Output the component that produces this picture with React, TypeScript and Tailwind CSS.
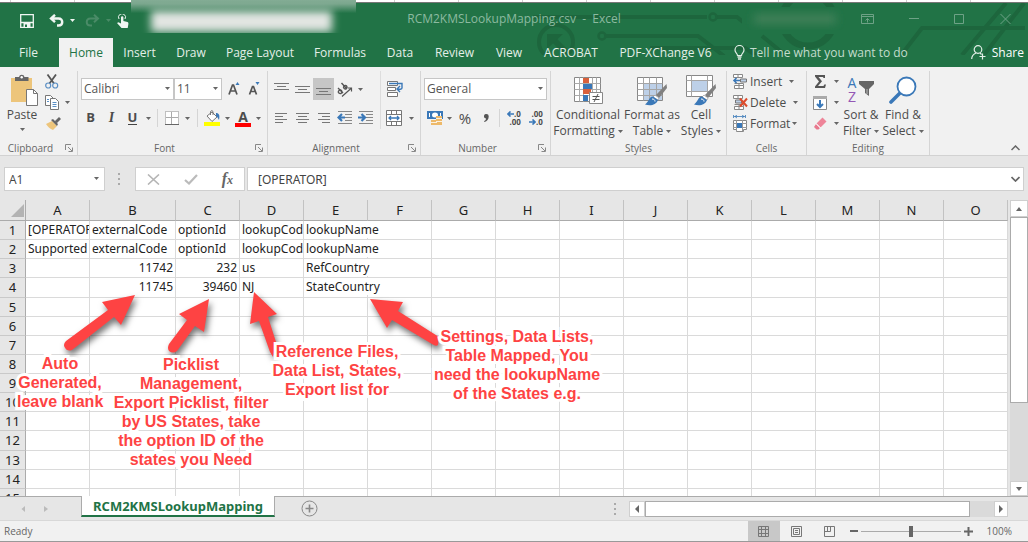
import React from "react";

type Kids = { children?: React.ReactNode };

function Caret() {
  return (
    <svg width="5" height="3" viewBox="0 0 5 3" aria-hidden="true" className="shrink-0">
      <path d="M0 0h5L2.5 3z" fill="#666" />
    </svg>
  );
}

function CaretButton({ label, className }: { label: string; className: string }) {
  return (
    <button type="button" aria-label={label} className={`flex h-full items-center justify-center ${className}`}>
      <Caret />
    </button>
  );
}

function Tool({ label, className = "w-[21px]", children }: Kids & { label: string; className?: string }) {
  return (
    <button type="button" aria-label={label} className={`flex h-full shrink-0 items-center justify-center ${className}`}>
      {children}
    </button>
  );
}

function Divider({ className }: { className: string }) {
  return (
    <span className={`flex h-[18px] justify-center ${className}`}>
      <span className="w-px bg-[#d5d5d5]" />
    </span>
  );
}

function Group({ label, launcher, className, children }: Kids & { label: string; launcher?: boolean; className: string }) {
  return (
    <section aria-label={label} className={`flex shrink-0 flex-col border-r border-[#d5d5d5] ${className}`}>
      <div className="h-[70px]">{children}</div>
      <div className="flex h-[14px] items-center text-[10px] leading-[14px] text-[#666]">
        <span className="flex-1 text-center">{label}</span>
        {launcher && (
          <button type="button" aria-label={`${label} options`} className="flex w-4 justify-center">
            <svg width="8" height="8" viewBox="0 0 8 8" fill="none" stroke="#888">
              <path d="M.5 6V.5H6M3 3l4 4M7.5 3.5v4h-4" />
            </svg>
          </button>
        )}
      </div>
    </section>
  );
}

function Picker({ label, value, className }: { label: string; value: string; className: string }) {
  return (
    <span className={`relative flex h-[22px] ${className}`}>
      <select
        aria-label={label}
        defaultValue={value}
        className="w-full appearance-none border border-[#c6c6c6] bg-white pl-[2px] text-xs leading-5 text-[#555] outline-none"
      >
        <option>{value}</option>
      </select>
      <span className="pointer-events-none absolute top-[9px] right-1">
        <Caret />
      </span>
    </span>
  );
}

function Lines({ rows }: { rows: [number, number, number][] }) {
  return (
    <svg width="15" height="14" viewBox="0 0 15 14" stroke="#777">
      {rows.map(([x1, x2, y]) => (
        <path key={y} d={`M${x1} ${y + 0.5}H${x2}`} />
      ))}
    </svg>
  );
}

function Indent({ out }: { out?: boolean }) {
  return (
    <svg width="16" height="14" viewBox="0 0 16 14" fill="none">
      <path d="M1 .5h14M8 3.5h7M8 6.5h7M8 9.5h7M1 12.5h14" stroke="#888" />
      <path d={out ? "M8 6.5H2M5 3L1.5 6.5 5 10" : "M0 6.5h6M3.500 3L7 6.500 3.500 10"} stroke="#3a78b8" strokeWidth="2.200" />
    </svg>
  );
}

function PaintBrush() {
  return (
    <g>
      <path d="M30.500 9L20 20l3 3 8-10z" fill="#808080" />
      <path d="M19 20l4 3-1 2-5-3z" fill="#fff" stroke="#888" strokeWidth=".6" />
      <path d="M17 21.500c-4 0-4 5-8 8 5 1.500 11 1 13-4.500z" fill="#3a78b8" />
      <path d="M16 24c2 0 3 1 3 2.500" stroke="#fff" fill="none" />
    </g>
  );
}

function ConditionalIcon() {
  return (
    <svg width="31" height="29" viewBox="0 0 31 29">
      <path d="M1.500 1.500h26v24h-26z" fill="#fff" stroke="#888" />
      <path d="M1.500 7.500h26M1.500 13.500h26M1.500 19.500h26M6.500 1.500v24M10.500 1.500v24M19.500 1.500v24M23.500 1.500v24" stroke="#aaa" />
      <path d="M10 2h6v5h-6zM10 13h8v5h-8z" fill="#d9603b" />
      <path d="M10 8h9v5h-9zM10 19h5v6h-5z" fill="#3a78b8" />
      <path d="M16.500 16.500h13v11h-13z" fill="#fff" stroke="#888" />
      <path d="M19.500 20.500h7M19.500 23.500h7M25 18l-4 8" stroke="#555" />
    </svg>
  );
}

function TableIcon() {
  return (
    <svg width="32" height="31" viewBox="0 0 32 31">
      <path d="M1.500 2.500h25v23h-25z" fill="#fff" stroke="#888" />
      <path d="M8 8h18v17H8z" fill="#bdd0e8" />
      <path d="M1.500 8.500h25M1.500 14.500h25M1.500 20.500h25M7.500 2.500v23M13.500 2.500v23M20.500 2.500v23" stroke="#a5a5a5" />
      <PaintBrush />
    </svg>
  );
}

function CellStylesIcon() {
  return (
    <svg width="32" height="31" viewBox="0 0 32 31">
      <path d="M1.500 .5h26v21h-26z" fill="#fff" stroke="#888" />
      <path d="M7 6h15v10H7z" fill="#bdd0e8" />
      <path d="M1.500 5.500h26M1.500 16.500h26M6.500 .5v21M22.500 .5v21" stroke="#a5a5a5" />
      <PaintBrush />
    </svg>
  );
}

function BigButton({ icon, first, second, className }: { icon: React.ReactNode; first: string; second: string; className: string }) {
  return (
    <button type="button" className={`flex flex-col items-center pt-[2px] text-xs leading-4 whitespace-nowrap ${className}`}>
      <span className="flex h-[34px] items-center">{icon}</span>
      <span>{first}</span>
      <span className="flex items-center gap-[3px]">
        {second}
        <Caret />
      </span>
    </button>
  );
}

function RowCells() {
  return <path d="M1.500 .5h9v3h-9zM6 .5v3M2.500 11.500h9v3h-9zM2.500 9.500h9v2M7 9.500v5" fill="#fff" stroke="#888" />;
}

function InsertIcon() {
  return (
    <svg width="16" height="15" viewBox="0 0 16 15">
      <RowCells />
      <path d="M8.500 5h6v3h-6z" fill="#bdd0e8" stroke="#777" />
      <path d="M8 6.500H2M4.500 4L2 6.500 4.500 9" fill="none" stroke="#3a78b8" strokeWidth="1.600" />
    </svg>
  );
}

function DeleteIcon() {
  return (
    <svg width="16" height="15" viewBox="0 0 16 15">
      <RowCells />
      <path d="M3.500 5h6v3h-6z" fill="#bdd0e8" stroke="#777" />
      <path d="M8 3.500l7 8M15 3.500l-7 8" stroke="#dd4b2c" strokeWidth="2" />
    </svg>
  );
}

function FormatIcon() {
  return (
    <svg width="16" height="17" viewBox="0 0 16 17">
      <path d="M2 1.500h11M1.500 0v3M13.500 0v3M5 0L3 1.500 5 3M10 0l2 1.500L10 3" fill="none" stroke="#3a78b8" strokeWidth=".8" />
      <path d="M1.500 5.500h13v9h-3v2h-7v-2h-3z" fill="#fff" stroke="#888" />
      <path d="M4.500 5v11M10.500 5v11M1 8.500h14M1 12.500h14" stroke="#999" />
      <path d="M5 8h5v5H5z" fill="#3a78b8" />
    </svg>
  );
}

function Ribbon() {
  return (
    <div className="flex h-[89px] shrink-0 border-b border-[#d2d2d2] bg-[#f1f1f1] pt-1 text-[#4c4c4c]">
      <Group label="Clipboard" launcher className="w-[78px]">
        <div className="flex">
          <button type="button" className="flex w-[44px] flex-col items-center pt-[2px] text-xs leading-4">
            <span className="flex h-[34px] items-center pl-1">
              <svg width="28" height="33" viewBox="0 0 28 33">
                <path d="M1 4h21v24H1z" fill="#edc57b" />
                <path d="M5 3h4a2.800 2.800 0 0 1 5.500 0h4v4H5z" fill="#666" />
                <circle cx="11.700" cy="3.300" r="1.200" fill="#fff" />
                <path d="M16.500 15.500h7l4 4v12h-11z" fill="#fff" stroke="#777" />
                <path d="M23.500 15.500v4h4" fill="none" stroke="#777" />
              </svg>
            </span>
            <span>Paste</span>
            <span className="flex h-3 items-center">
              <Caret />
            </span>
          </button>
          <div className="flex flex-col">
            <div className="h-[21px]">
              <Tool label="Cut" className="w-4">
                <svg width="14" height="15" viewBox="0 0 14 15" fill="none">
                  <path d="M2.500 .5L9 9.500M11 .5L4.500 9.500" stroke="#555" strokeWidth="1.800" />
                  <circle cx="3.200" cy="11.500" r="2.500" stroke="#5b8fc4" strokeWidth="1.200" />
                  <circle cx="10.200" cy="11.500" r="2.500" stroke="#5b8fc4" strokeWidth="1.200" />
                </svg>
              </Tool>
            </div>
            <div className="flex h-[21px]">
              <Tool label="Copy" className="w-4">
                <svg width="15" height="15" viewBox="0 0 15 15" fill="#fff" stroke="#777">
                  <path d="M.5 .5h5l3 3v7h-8z" />
                  <path d="M5.500 3.500h5l3 3v8h-8z" />
                  <path d="M2 4.500h2M2 6.500h2M7.500 7.500h4M7.500 9.500h4M7.500 11.500h4" stroke="#5b8fc4" />
                </svg>
              </Tool>
              <CaretButton label="Copy options" className="w-[15px]" />
            </div>
            <div className="h-[21px]">
              <Tool label="Format Painter" className="w-[18px]">
                <svg width="15" height="13" viewBox="0 0 15 13">
                  <path d="M0 7l6-3 5 5-4 4c-3-1-5-3-7-6z" fill="#edc57b" />
                  <path d="M5 3l2-1 5 5-1 2zM9 4l4-4 2 2-4 4z" fill="#666" />
                </svg>
              </Tool>
            </div>
          </div>
        </div>
      </Group>

      <Group label="Font" launcher className="w-[190px]">
        <div className="flex flex-col gap-[7px] pt-[7px]">
          <div className="flex h-[22px] pl-[3px]">
            <Picker label="Font" value="Calibri" className="w-[93px]" />
            <Picker label="Font size" value="11" className="mr-[2px] w-[48px]" />
            <Tool label="Increase font size" className="w-5">
              <svg width="13" height="15" viewBox="0 0 13 15" fill="none">
                <path d="M1 12.500L4.500 3h1L9 12.500M2.500 9h5" stroke="#555" strokeWidth="1.700" />
                <path d="M7.500 3l2-3 2 3z" fill="#3a78b8" />
              </svg>
            </Tool>
            <Tool label="Decrease font size" className="w-5">
              <svg width="13" height="15" viewBox="0 0 13 15" fill="none">
                <path d="M1.500 12.500l3-8h1l3 8M2.500 9.500h5" stroke="#555" strokeWidth="1.700" />
                <path d="M7.500 0l2 3 2-3z" fill="#3a78b8" />
              </svg>
            </Tool>
          </div>
          <div className="flex h-[22px] items-center pl-[2px] text-[13px] font-bold">
            <Tool label="Bold">B</Tool>
            <Tool label="Italic">
              <span className="font-['Liberation_Serif',serif] text-sm italic">I</span>
            </Tool>
            <Tool label="Underline">
              <span className="border-b border-[#444] leading-[13px]">U</span>
            </Tool>
            <CaretButton label="Underline options" className="w-[10px]" />
            <Divider className="w-[9px]" />
            <Tool label="Borders" className="w-5">
              <svg width="14" height="14" viewBox="0 0 14 14" fill="#fff" stroke="#888">
                <path d="M.5 .5h13v13H.5z" strokeDasharray="1 1" />
                <path d="M6.500 1v12M1 6.500h12" stroke="#aaa" />
                <path d="M0 13.500h14" stroke="#666" />
              </svg>
            </Tool>
            <CaretButton label="Border options" className="w-[11px]" />
            <Divider className="w-[9px]" />
            <Tool label="Fill colour" className="w-5">
              <svg width="17" height="16" viewBox="0 0 17 16">
                <path d="M3 6l5-4 5 5-5 4.500z" fill="#fff" stroke="#777" />
                <path d="M6.500 5V1.500Q8 -.5 9 1.500V5" fill="none" stroke="#777" />
                <path d="M12 3c3 0 4 2 3 7-1-1-1-3-3-4z" fill="#3a78b8" />
                <path d="M0 12h16v4H0z" fill="#ff0" />
              </svg>
            </Tool>
            <CaretButton label="Fill colour options" className="w-[10px]" />
            <Tool label="Font colour" className="w-[22px]">
              <span className="border-b-4 border-[#f00] px-[3px] text-sm leading-[13px]">A</span>
            </Tool>
            <CaretButton label="Font colour options" className="w-[9px]" />
          </div>
        </div>
      </Group>

      <Group label="Alignment" launcher className="w-[153px]">
        <div className="flex pl-[3px]">
          <div className="flex w-[110px] flex-col gap-[7px] border-r border-[#ddd] pt-[7px]">
            <div className="flex h-[22px]">
              <Tool label="Top align">
                <Lines rows={[[0, 15, 1], [3, 12, 4], [0, 15, 7]]} />
              </Tool>
              <Tool label="Middle align">
                <Lines rows={[[0, 15, 4], [3, 12, 7], [0, 15, 10]]} />
              </Tool>
              <Tool label="Bottom align" className="w-[21px] bg-[#c6c6c6]">
                <Lines rows={[[0, 15, 6], [3, 12, 9], [0, 15, 12]]} />
              </Tool>
              <Tool label="Orientation">
                <svg width="16" height="15" viewBox="0 0 16 15" fill="none" stroke="#555">
                  <path d="M1 6l5 5M2 8.500c-2 2 1 4 2.500 2.500S4 7 2 8.500M4.500 1l5.500 6M7 4c2-2 4 1 2.500 2.500S5.500 6 7 4" strokeWidth="1.400" />
                  <path d="M5 14.500L14.500 6M11 6h3.500v3.500" strokeWidth="1.200" />
                </svg>
              </Tool>
              <CaretButton label="Orientation options" className="w-[10px]" />
            </div>
            <div className="flex h-[22px]">
              <Tool label="Align left">
                <Lines rows={[[1, 13, 2], [1, 9, 5], [1, 13, 8], [1, 9, 11]]} />
              </Tool>
              <Tool label="Center">
                <Lines rows={[[1, 14, 2], [3, 12, 5], [1, 14, 8], [3, 12, 11]]} />
              </Tool>
              <Tool label="Align right">
                <Lines rows={[[2, 14, 2], [6, 14, 5], [2, 14, 8], [6, 14, 11]]} />
              </Tool>
              <Tool label="Decrease indent">
                <Indent out />
              </Tool>
              <Tool label="Increase indent">
                <Indent />
              </Tool>
            </div>
          </div>
          <div className="flex flex-col gap-[7px] pt-[7px]">
            <div className="flex h-[22px]">
              <Tool label="Wrap text" className="w-[28px]">
                <svg width="17" height="16" viewBox="0 0 17 16" fill="none" stroke="#777">
                  <path d="M.5 .5h10v4H.5zM.5 6.500h8v3h-8zM.5 11.500h10v4H.5z" fill="#fff" />
                  <path d="M2 2.500h13V7c0 1.500-3 1.500-4 1M13 5l-3 3 3 3" stroke="#3a78b8" strokeWidth="1.400" />
                </svg>
              </Tool>
            </div>
            <div className="flex h-[22px]">
              <Tool label="Merge and center" className="w-[26px]">
                <svg width="16" height="16" viewBox="0 0 16 16" fill="#fff" stroke="#777">
                  <path d="M.5 .5h15v15H.5zM.5 4.500h15M.5 11.500h15M5.500 .5v4M10.500 .5v4M5.500 11.500v4M10.500 11.500v4" />
                  <path d="M3 8h10M5 6L3 8l2 2M11 6l2 2-2 2" fill="none" stroke="#3a78b8" strokeWidth="1.300" />
                </svg>
              </Tool>
              <CaretButton label="Merge options" className="w-[8px]" />
            </div>
          </div>
        </div>
      </Group>

      <Group label="Number" launcher className="w-[130px]">
        <div className="flex flex-col gap-[7px] pt-[7px] pl-[3px]">
          <Picker label="Number format" value="General" className="w-[123px]" />
          <div className="flex h-[22px] items-center">
            <Tool label="Accounting format">
              <svg width="16" height="16" viewBox="0 0 16 16">
                <path d="M0 1h16v8H0z" fill="#3a78b8" />
                <ellipse cx="8" cy="5" rx="3" ry="2.500" fill="#fff" />
                <path d="M2 3h1v4H2zM13 3h1v4h-1z" fill="#fff" />
                <path d="M9 6h6v9H9zM4 10h6v5H4z" fill="#edb96a" />
                <path d="M9 8.500h6M9 11.500h6M4 12.500h6" stroke="#fff" strokeWidth=".8" />
              </svg>
            </Tool>
            <CaretButton label="Accounting options" className="w-[9px]" />
            <Tool label="Percent" className="w-[22px]">
              <span className="text-[15px]">%</span>
            </Tool>
            <Tool label="Comma" className="w-5">
              <svg width="5" height="8" viewBox="0 0 5 8">
                <path d="M2.300 0A2.200 2.200 0 0 0 2 4.400C2 6 1 6.500 0 7l.5 1C3 7.500 4.700 5.500 4.700 2.600A2.400 2.400 0 0 0 2.300 0z" fill="#555" />
              </svg>
            </Tool>
            <Divider className="w-[7px]" />
            <Tool label="Increase decimal" className="w-[22px]">
              <span className="flex flex-col items-end text-[8px] leading-[8px] font-bold">
                <span className="flex items-center">
                  <svg width="7" height="6" viewBox="0 0 7 6" fill="none" stroke="#3a78b8" strokeWidth="1.600">
                    <path d="M7 3H1M3.500 .5L1 3l2.500 2.500" />
                  </svg>
                  .0
                </span>
                <span>.00</span>
              </span>
            </Tool>
            <Tool label="Decrease decimal" className="w-[22px]">
              <span className="flex flex-col items-end text-[8px] leading-[8px] font-bold">
                <span>.00</span>
                <span className="flex items-center">
                  <svg width="7" height="6" viewBox="0 0 7 6" fill="none" stroke="#3a78b8" strokeWidth="1.600">
                    <path d="M0 3h6M3.500 .5L6 3 3.500 5.500" />
                  </svg>
                  .0
                </span>
              </span>
            </Tool>
          </div>
        </div>
      </Group>

      <Group label="Styles" className="w-[176px]">
        <div className="flex">
          <BigButton className="w-[74px]" first="Conditional" second="Formatting" icon={<ConditionalIcon />} />
          <BigButton className="w-[54px]" first="Format as" second="Table" icon={<TableIcon />} />
          <BigButton className="w-[44px]" first="Cell" second="Styles" icon={<CellStylesIcon />} />
        </div>
      </Group>

      <Group label="Cells" className="w-[80px]">
        <div className="flex flex-col pl-[5px] text-xs">
          <button type="button" className="flex h-[21px] items-center gap-[2px]">
            <InsertIcon />
            <span className="mr-[5px]">Insert</span>
            <Caret />
          </button>
          <button type="button" className="flex h-[21px] items-center gap-[2px]">
            <DeleteIcon />
            <span className="mr-[5px]">Delete</span>
            <Caret />
          </button>
          <button type="button" className="flex h-[21px] items-center gap-[2px]">
            <FormatIcon />
            <span>Format</span>
            <Caret />
          </button>
        </div>
      </Group>

      <Group label="Editing" className="w-[123px]">
        <div className="flex">
          <div className="flex w-[34px] flex-col pl-[2px]">
            <div className="flex h-[21px]">
              <Tool label="AutoSum" className="w-[22px]">
                <svg width="13" height="13" viewBox="0 0 13 13">
                  <path d="M1 0h10v3h-1.500l-.5-1H4.500L8 6.300 4 11h5.500l.8-1.500H12L11 13H1v-1.500L5 6.500 1 1.500z" fill="#555" />
                </svg>
              </Tool>
              <CaretButton label="AutoSum options" className="w-[10px]" />
            </div>
            <div className="flex h-[21px]">
              <Tool label="Fill" className="w-[22px]">
                <svg width="14" height="14" viewBox="0 0 14 14">
                  <path d="M.5 .5h13v13H.5z" fill="#fff" stroke="#888" />
                  <path d="M0 0h14v3H0z" fill="#aaa" />
                  <path d="M7 4v7M4 8l3 3 3-3" fill="none" stroke="#3a78b8" strokeWidth="2" />
                </svg>
              </Tool>
              <CaretButton label="Fill options" className="w-[10px]" />
            </div>
            <div className="flex h-[21px]">
              <Tool label="Clear" className="w-[22px]">
                <svg width="13" height="13" viewBox="0 0 13 13">
                  <path d="M8.500 .5l4 4-6 6-4-4z" fill="#ee8599" />
                  <path d="M2 7l4 4-1.500 1.500h-2L0 10z" fill="#e8798e" />
                  <path d="M2 6.500l4.500 4.500" stroke="#fff" />
                </svg>
              </Tool>
              <CaretButton label="Clear options" className="w-[10px]" />
            </div>
          </div>
          <BigButton
            className="w-[40px]"
            first="Sort &amp;"
            second="Filter"
            icon={
              <span className="flex items-center gap-[3px]">
                <span className="flex flex-col text-sm leading-[14px]">
                  <span className="text-[#3a78b8]">A</span>
                  <span className="text-[#9457b5]">Z</span>
                </span>
                <svg width="15" height="19" viewBox="0 0 15 19">
                  <path d="M0 0h15v3L10 8v7l-4-3V8L0 3z" fill="#666" />
                  <path d="M8 8v5" stroke="#bbb" />
                </svg>
              </span>
            }
          />
          <BigButton
            className="w-[44px]"
            first="Find &amp;"
            second="Select"
            icon={
              <svg width="28" height="28" viewBox="0 0 28 28">
                <path d="M11 17l-9 9" stroke="#3a78b8" strokeWidth="3.600" strokeLinecap="round" />
                <circle cx="17.500" cy="10.500" r="9" fill="#fff" stroke="#3a78b8" strokeWidth="1.800" />
              </svg>
            }
          />
        </div>
      </Group>

      <button type="button" aria-label="Collapse the ribbon" className="mt-auto mr-2 mb-1 ml-auto">
        <svg width="9" height="6" viewBox="0 0 9 6" fill="none" stroke="#666" strokeWidth="1.500">
          <path d="M.5 5l4-4 4 4" />
        </svg>
      </button>
    </div>
  );
}

const tabs = ["File", "Home", "Insert", "Draw", "Page Layout", "Formulas", "Data", "Review", "View", "ACROBAT", "PDF-XChange V6"];

function TitleBar() {
  return (
    <header className="relative flex h-[65px] shrink-0 flex-col overflow-hidden border-t border-[#777] bg-[#217346] text-xs text-[#e4efe8]">
      <svg
        aria-hidden="true"
        className="absolute top-0 right-0"
        width="498"
        height="52"
        viewBox="530 3 498 52"
        fill="none"
        stroke="#1d663d"
        strokeWidth="4"
      >
        <circle cx="556" cy="42" r="17" />
        <path d="M568 54L553 39" strokeWidth="6" />
        <path d="M547 34h16l-16 15z" fill="#1d663d" stroke="none" />
        <path d="M533 17h174M717 17h20l6 5" />
        <circle cx="713" cy="17" r="3.500" strokeWidth="2.500" />
        <circle cx="602" cy="36" r="3.500" strokeWidth="2.500" />
        <path d="M606 36h92l26 20M650 48h95l12 8M762 36l22 18" />
        <circle cx="808" cy="20" r="26" strokeWidth="7" />
        <path d="M902 54l20-26h103M962 55l44-52M984 55l40-52" />
      </svg>
      <div className="relative flex h-[35px] items-center">
        <div className="flex items-center pl-5 text-white">
          <button type="button" aria-label="Save" className="mr-[15px]">
            <svg width="14" height="14" viewBox="0 0 14 14" fill="none" stroke="#f0f6f2" strokeWidth="1.300">
              <path d="M.7 .7h12.600v12.600H.7zM.7 8.500h12.600" />
              <path d="M3.500 8.500h7V13h-7z" fill="#f0f6f2" stroke="none" />
              <path d="M5 10.500h2V13H5z" fill="#217346" stroke="none" />
            </svg>
          </button>
          <button type="button" aria-label="Undo" className="mr-[6px]">
            <svg width="15" height="13" viewBox="0 0 15 13" fill="none" stroke="#f0f6f2" strokeWidth="2.400">
              <path d="M1.500 4.500h8c5 0 5 7 0 7H8M6 .8L2 4.500l4 3.700" />
            </svg>
          </button>
          <svg width="5" height="3" viewBox="0 0 5 3" className="mr-[10px]">
            <path d="M0 0h5L2.500 3z" fill="#f0f6f2" />
          </svg>
          <button type="button" aria-label="Redo" className="mr-[6px]">
            <svg width="15" height="13" viewBox="0 0 15 13" fill="none" stroke="#4a8b67" strokeWidth="2">
              <path d="M13.500 4.500h-8c-5 0-5 7 0 7H7M9 .8l4 3.700-4 3.700" />
            </svg>
          </button>
          <svg width="5" height="3" viewBox="0 0 5 3" className="mr-[6px]">
            <path d="M0 0h5L2.500 3z" fill="#4a8b67" />
          </svg>
          <button type="button" aria-label="Touch mode">
            <svg width="12" height="14" viewBox="0 0 12 14">
              <path d="M2 5a3.500 3.500 0 1 1 6 0" fill="none" stroke="#f0f6f2" />
              <path d="M4 3.500a1.200 1.200 0 0 1 2.400 0V7l4 1c1 .3 1 1 1 2l-.7 4H4.500L0 9l1.500-.8L4 9.500z" fill="#f0f6f2" />
            </svg>
          </button>
        </div>
        <p className="absolute inset-x-0 -mt-1 text-center text-[#8cbaa0]">RCM2KMSLookupMapping.csv&nbsp; - &nbsp;Excel</p>
        <div className="-mt-1 ml-auto flex items-center gap-[35px] pr-[17px] text-[#6ea286]">
          <button type="button" aria-label="Ribbon display options">
            <svg width="13" height="10" viewBox="0 0 13 10" fill="none" stroke="currentColor">
              <path d="M.5 .5h12v9H.5zM.5 2.500h12M6.500 8.500v-4M4.500 6.500l2-2 2 2" />
            </svg>
          </button>
          <button type="button" aria-label="Minimize">
            <svg width="10" height="10" viewBox="0 0 10 10" stroke="currentColor">
              <path d="M0 4.500h10" />
            </svg>
          </button>
          <button type="button" aria-label="Maximize">
            <svg width="11" height="10" viewBox="0 0 11 10" fill="none" stroke="currentColor">
              <path d="M.5 .5h9v9h-9z" />
            </svg>
          </button>
          <button type="button" aria-label="Close">
            <svg width="11" height="10" viewBox="0 0 11 10" stroke="currentColor">
              <path d="M.5 0l10 10M10.500 0l-10 10" />
            </svg>
          </button>
        </div>
      </div>
      <nav className="relative flex h-[29px] items-stretch">
        <div className="grid grid-cols-[57px_56px_53px_50px_88px_72px_48px_61px_48px_76px_113px]">
          {tabs.map((t) => (
            <button
              type="button"
              key={t}
              className={
                t === "Home"
                  ? "ml-[2px] bg-[#f1f1f1] text-[#217346]"
                  : "whitespace-nowrap"
              }
            >
              {t}
            </button>
          ))}
        </div>
        <button type="button" className="ml-[12px] flex items-center gap-[5px] text-[#c3dccd]">
          <svg width="11" height="15" viewBox="0 0 11 15" fill="none" stroke="#e4efe8" strokeWidth="1.200">
            <path d="M3.500 10.500C3.500 8 1 8 1 5a4.500 4.500 0 0 1 9 0c0 3-2.500 3-2.500 5.500z" />
            <path d="M3.500 12h4M4 14h3" strokeWidth="1.600" />
          </svg>
          Tell me what you want to do
        </button>
        <button type="button" className="mr-1 ml-auto flex items-center gap-[6px] text-white">
          <svg width="15" height="15" viewBox="0 0 15 15" fill="none" stroke="#e4efe8" strokeWidth="1.200">
            <circle cx="7" cy="4.500" r="3.800" />
            <path d="M.7 14c0-3 2-5 4.300-6M9 8l1.500 1.500M11.500 8.500v6M8.500 11.500h6" />
          </svg>
          Share
        </button>
      </nav>
    </header>
  );
}

function BlurredCaptions() {
  return (
    <svg aria-hidden="true" className="pointer-events-none absolute top-0 left-[131px]" width="720" height="36" viewBox="131 0 720 36">
      <defs>
        <filter id="soft" x="-20%" y="-60%" width="140%" height="220%">
          <feGaussianBlur stdDeviation="4" />
        </filter>
        <clipPath id="left">
          <path d="M131 0h225v33H131z" />
        </clipPath>
        <linearGradient id="fade" x2="0" y2="1">
          <stop offset="0" stopColor="#84ac95" />
          <stop offset=".12" stopColor="#7aa68d" />
          <stop offset=".4" stopColor="#217346" />
        </linearGradient>
      </defs>
      <g clipPath="url(#left)">
        <path d="M131 0h225v33H131z" fill="url(#fade)" />
        <rect x="151" y="11" width="181" height="21" fill="#e2e5e2" filter="url(#soft)" />
      </g>
      <rect x="742" y="7" width="98" height="27" fill="#217346" />
      <rect x="754" y="14" width="82" height="10" fill="#3f8059" filter="url(#soft)" />
    </svg>
  );
}

function FormulaBar() {
  return (
    <div className="flex h-[44px] shrink-0 items-start bg-[#e6e6e6] px-1 pt-[11px] text-xs text-[#444]">
      <div className="relative">
        <input
          aria-label="Name box"
          defaultValue="A1"
          className="block h-6 w-[101px] border border-[#cfcfcf] bg-white px-1 outline-none"
        />
        <span className="absolute top-[10px] right-[6px] flex">
          <Caret />
        </span>
      </div>
      <svg width="3" height="12" viewBox="0 0 3 12" className="mt-[6px] ml-[13px]">
        <path d="M0 0h2v2H0zM0 5h2v2H0zM0 10h2v2H0z" fill="#aaa" />
      </svg>
      <div className="mr-[2px] ml-[14px] flex h-6 w-[110px] items-center justify-between border border-[#cfcfcf] bg-white px-[11px]">
        <button type="button" aria-label="Cancel">
          <svg width="13" height="11" viewBox="0 0 13 11" stroke="#b5b5b5" strokeWidth="1.600">
            <path d="M1 .5l11 10M12 .5l-11 10" />
          </svg>
        </button>
        <button type="button" aria-label="Enter">
          <svg width="14" height="11" viewBox="0 0 14 11" fill="none" stroke="#bbb" strokeWidth="2.200">
            <path d="M1 6l4 3.500L13 1" />
          </svg>
        </button>
        <button type="button" aria-label="Insert function" className="font-['Liberation_Serif',serif] text-base leading-4 font-bold text-[#666] italic">
          f<span className="text-xs">x</span>
        </button>
      </div>
      <div className="relative min-w-0 flex-1">
        <input
          aria-label="Formula"
          defaultValue="[OPERATOR]"
          className="block h-6 w-full border border-[#cfcfcf] bg-white px-[10px] font-['Noto_Sans',sans-serif] outline-none"
        />
        <svg width="9" height="6" viewBox="0 0 9 6" fill="none" stroke="#666" strokeWidth="1.700" className="absolute top-[9px] right-1">
          <path d="M.5 1l4 4 4-4" />
        </svg>
      </div>
    </div>
  );
}

const columns = "ABCDEFGHIJKLMNO".split("");
const data: string[][] = [
  ["[OPERATOR]", "externalCode", "optionId", "lookupCode", "lookupName"],
  ["Supported", "externalCode", "optionId", "lookupCode", "lookupName"],
  ["", "11742", "232", "us", "RefCountry"],
  ["", "11745", "39460", "NJ", "StateCountry"],
];

function Sheet() {
  return (
    <table className="h-[308px] w-[1008px] table-fixed border-separate border-spacing-0 font-['Noto_Sans',sans-serif] text-xs text-[#222]">
      <colgroup>
        <col className="w-[26px]" />
        {columns.map((c) => (
          <col key={c} className={c === "B" ? "w-[86px]" : "w-[64px]"} />
        ))}
      </colgroup>
      <thead>
        <tr className="h-[21px]">
          <th aria-label="Select all" className="border-r border-b border-[#ababab] bg-[#e6e6e6] p-0">
            <svg width="13" height="13" viewBox="0 0 13 13" className="ml-auto mr-[1px]">
              <path d="M13 0v13H0z" fill="#b3b3b3" />
            </svg>
          </th>
          {columns.map((c) => (
            <th key={c} scope="col" className="border-r border-b border-r-[#c2c2c2] border-b-[#ababab] bg-[#e6e6e6] p-0 text-[13px] leading-[18px] font-normal">
              {c}
            </th>
          ))}
        </tr>
      </thead>
      <tbody>
        {Array.from({ length: 15 }, (_, r) => (
          <tr key={r}>
            <th scope="row" className="border-r border-b border-r-[#ababab] border-b-[#c9c9c9] bg-[#e6e6e6] p-0 text-[13px] leading-[18px] font-normal">
              {r + 1}
            </th>
            {columns.map((c, i) => {
              const value = data[r]?.[i] ?? "";
              if (c === "E" && value) {
                return (
                  <td key={c} className="border-r border-b border-[#dadada] p-0 pl-[2px] leading-[18px] whitespace-nowrap">
                    <span className="relative bg-white">{value}</span>
                  </td>
                );
              }
              return (
                <td
                  key={c}
                  className={
                    /^\d+$/.test(value)
                      ? "overflow-hidden border-r border-b border-[#dadada] p-0 pr-[2px] text-right leading-[18px] whitespace-nowrap"
                      : "overflow-hidden border-r border-b border-[#dadada] p-0 pl-[2px] leading-[18px] whitespace-nowrap"
                  }
                >
                  {value}
                </td>
              );
            })}
          </tr>
        ))}
      </tbody>
    </table>
  );
}

const notes = [
  { place: "top-[154px] left-[17px] w-[86px]", lines: ["Auto", "Generated,", "leave blank"] },
  {
    place: "top-[155px] left-[111px] w-[160px]",
    lines: ["Picklist", "Management,", "Export Picklist, filter", "by US States, take", "the option ID of the", "states you Need"],
  },
  { place: "top-[142px] left-[267px] w-[140px]", lines: ["Reference Files,", "Data List, States,", "Export list for"] },
  {
    place: "top-[127px] left-[427px] w-[180px]",
    lines: ["Settings, Data Lists,", "Table Mapped, You", "need the lookupName", "of the States e.g."],
  },
];

function Annotations() {
  return (
    <div className="pointer-events-none absolute top-0 left-0">
      <svg
        aria-hidden="true"
        width="620"
        height="290"
        viewBox="0 200 620 290"
        fill="#fe4343"
        className="[filter:drop-shadow(2px_4px_3px_rgba(0,0,0,0.55))]"
      >
        <path d="M135 295L121 325 114 317 72 350Q67 352 64.500 347 63 344 66 341L108 310 102 302z" />
        <path d="M209 299L204 332 195 326 177 351Q173 354 169 351 167 348 169 344L187 320 179 314z" />
        <path d="M254 292L277 314 268 317 276 342 273 357 270 352 259 321 250 324z" />
        <path d="M370 299L403 302 398 311 439 337 438 345Q436 347 432 344L392 320 387 328z" />
      </svg>
      {notes.map((n) => (
        <p
          key={n.lines[0]}
          className={`absolute text-center font-['Liberation_Sans',sans-serif] text-base leading-[19px] font-bold whitespace-nowrap text-[#fe4343] [paint-order:stroke_fill] [-webkit-text-stroke:6px_white] ${n.place}`}
        >
          {n.lines.map((l) => (
            <span key={l} className="block">
              {l}
            </span>
          ))}
        </p>
      ))}
    </div>
  );
}

function Arrow({ d, color = "#666" }: { d: string; color?: string }) {
  return (
    <svg width="8" height="8" viewBox="0 0 8 8" fill={color}>
      <path d={d} />
    </svg>
  );
}

function VerticalScroll() {
  return (
    <div className="flex w-[18px] shrink-0 flex-col bg-[#dadada]">
      <button type="button" aria-label="Scroll up" className="flex h-[17px] items-center justify-center border border-[#cfcfcf] bg-white">
        <Arrow d="M1 6h6L4 2z" />
      </button>
      <div className="h-[186px] border border-[#ababab] bg-white" />
      <button type="button" aria-label="Scroll down" className="mt-auto flex h-[15px] items-center justify-center border border-[#cfcfcf] bg-white">
        <Arrow d="M1 2h6L4 6z" />
      </button>
    </div>
  );
}

function TabBar() {
  return (
    <div className="flex h-6 shrink-0 bg-[#e6e6e6] text-[#217346]">
      <div className="flex w-[81px] items-center border-t border-[#ababab] pl-5">
        <button type="button" aria-label="Previous sheet" className="mr-[14px]">
          <Arrow d="M5 1v6L1.500 4z" color="#bbb" />
        </button>
        <button type="button" aria-label="Next sheet">
          <Arrow d="M2 1v6l4-3z" color="#bbb" />
        </button>
      </div>
      <button
        type="button"
        className="h-[21px] w-[194px] border-x border-b-2 border-x-[#ababab] border-b-[#217346] bg-white font-['Noto_Sans',sans-serif] text-[13px] leading-[18px] font-bold whitespace-nowrap"
      >
        RCM2KMSLookupMapping
      </button>
      <div className="flex min-w-0 flex-1 border-t border-[#ababab] pr-5">
        <button type="button" aria-label="New sheet" className="ml-[26px]">
          <svg width="17" height="17" viewBox="0 0 17 17" fill="none" stroke="#888">
            <circle cx="8.500" cy="8.500" r="7.500" />
            <path d="M4.500 8.500h8M8.500 4.500v8" strokeWidth="1.600" />
          </svg>
        </button>
        <div className="ml-auto flex items-center">
          <svg width="2" height="12" viewBox="0 0 2 12" className="mr-[13px]">
            <path d="M0 0h2v2H0zM0 5h2v2H0zM0 10h2v2H0z" fill="#aaa" />
          </svg>
          <div className="flex h-4 items-stretch bg-[#dadada]">
            <button type="button" aria-label="Scroll left" className="flex w-4 items-center justify-center border border-[#cfcfcf] bg-white">
              <Arrow d="M6 0v8L2 4z" />
            </button>
            <div className="mr-6 w-[325px] border border-[#ababab] bg-white" />
            <button type="button" aria-label="Scroll right" className="flex w-[14px] items-center justify-center border border-[#cfcfcf] bg-white">
              <Arrow d="M2 0v8l4-4z" />
            </button>
          </div>
        </div>
      </div>
    </div>
  );
}

function StatusBar() {
  return (
    <footer className="flex h-[22px] shrink-0 items-stretch border-t border-b border-t-[#d8d8d8] border-b-[#999] bg-[#f1f1f1] pr-4 pl-1 text-[10px] text-[#666]">
      <span className="self-center">Ready</span>
      <div className="ml-auto flex items-stretch">
        <button type="button" aria-label="Normal view" className="flex w-[32px] items-center justify-center bg-[#c8c8c8]">
          <svg width="11" height="11" viewBox="0 0 11 11" fill="none" stroke="#777">
            <path d="M.5 .5h10v10H.5zM3.500 .5v10M7.500 .5v10M.5 3.500h10M.5 7.500h10" />
          </svg>
        </button>
        <button type="button" aria-label="Page layout view" className="flex w-[33px] items-center justify-center">
          <svg width="11" height="11" viewBox="0 0 11 11" fill="none" stroke="#777">
            <path d="M.5 .5h10v10H.5zM2.500 2.500h6v6h-6zM4 4.500h3M4 6.500h3" />
          </svg>
        </button>
        <button type="button" aria-label="Page break preview" className="flex w-[33px] items-center justify-center">
          <svg width="11" height="11" viewBox="0 0 11 11" fill="none" stroke="#777">
            <path d="M.5 .5h10v10H.5zM3.500 .5v5M6.500 .5v5M.5 5.500h6" />
          </svg>
        </button>
        <button type="button" aria-label="Zoom out" className="ml-1 flex w-[8px] items-center">
          <svg width="8" height="8" viewBox="0 0 8 8" stroke="#666" strokeWidth="2">
            <path d="M0 4h8" />
          </svg>
        </button>
        <input
          type="range"
          aria-label="Zoom"
          defaultValue={50}
          className="mx-[3px] my-auto h-[11px] w-[100px] appearance-none bg-transparent [&::-webkit-slider-runnable-track]:h-px [&::-webkit-slider-runnable-track]:bg-[#aaa] [&::-webkit-slider-thumb]:mt-[-5px] [&::-webkit-slider-thumb]:h-[11px] [&::-webkit-slider-thumb]:w-1 [&::-webkit-slider-thumb]:appearance-none [&::-webkit-slider-thumb]:bg-[#666]"
        />
        <button type="button" aria-label="Zoom in" className="flex w-[9px] items-center">
          <svg width="9" height="9" viewBox="0 0 9 9" stroke="#666" strokeWidth="2">
            <path d="M0 4.500h9M4.500 0v9" />
          </svg>
        </button>
        <span className="ml-[14px] self-center">100%</span>
      </div>
    </footer>
  );
}

export default function App() {
  return (
    <div className="relative flex h-screen flex-col overflow-hidden bg-white font-['Open_Sans',sans-serif]">
      <div className="flex h-[2px] shrink-0 pl-[10px]">
        {Array.from({ length: 17 }, (_, i) => (
          <span key={i} className="w-16 shrink-0 border-l border-[#d0d0d0]" />
        ))}
      </div>
      <TitleBar />
      <BlurredCaptions />
      <Ribbon />
      <FormulaBar />
      <main className="flex min-h-0 flex-1 bg-[#e6e6e6]">
        <div className="relative min-w-0 flex-1 overflow-hidden">
          <div className="w-[1008px] bg-white">
            <Sheet />
          </div>
          <Annotations />
        </div>
        <VerticalScroll />
      </main>
      <TabBar />
      <StatusBar />
    </div>
  );
}
